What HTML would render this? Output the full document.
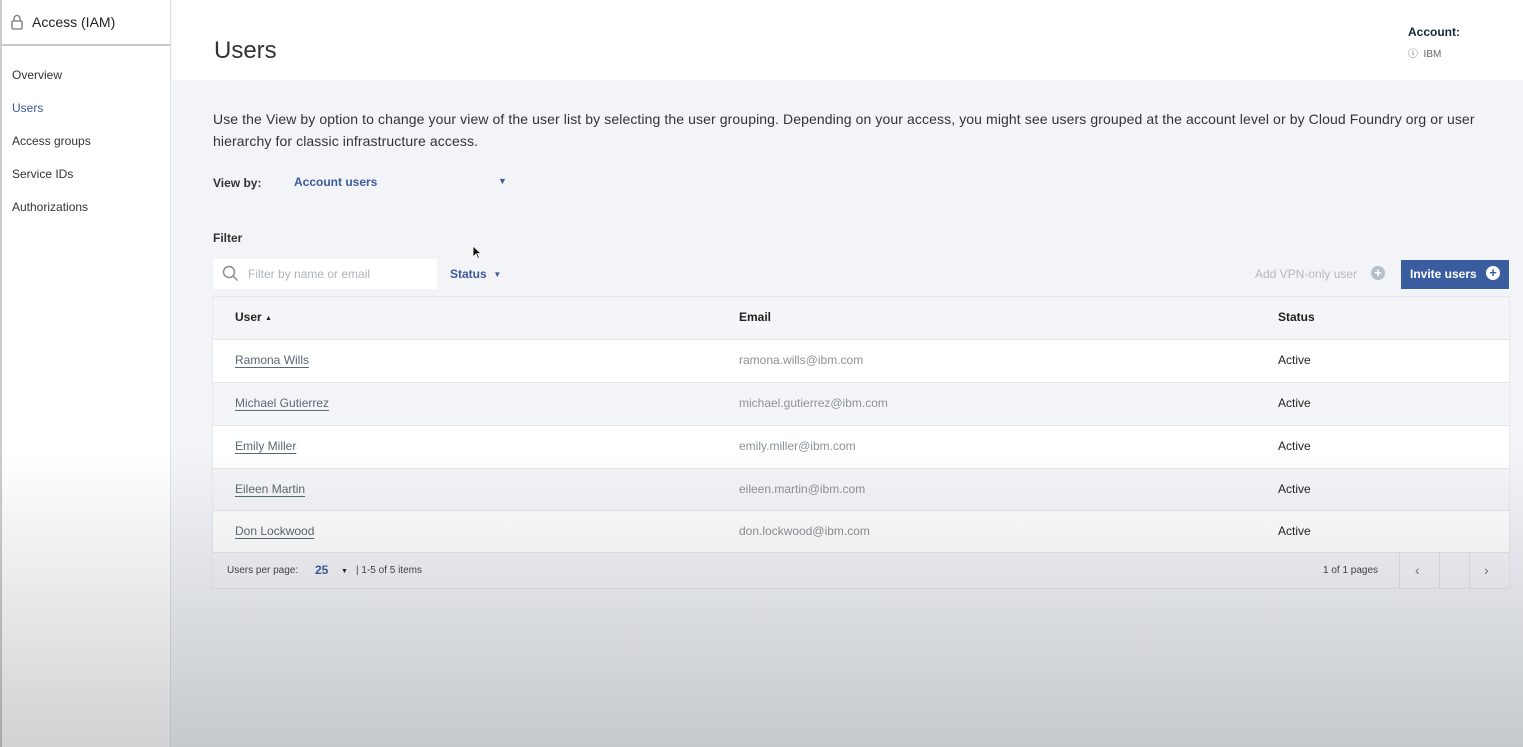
<!DOCTYPE html>
<html><head><meta charset="utf-8"><style>
*{margin:0;padding:0;box-sizing:border-box}
body{width:1523px;height:747px;overflow:hidden;position:relative;font-family:"Liberation Sans",sans-serif;background:#f2f4f8;color:#152935}
.side{position:absolute;left:0;top:0;width:171px;height:747px;background:#fff;border-left:2px solid #ccc;border-right:1px solid #e0e3e8}
.side .hd{height:46px;border-bottom:2px solid #c8c8c8;display:flex;align-items:center;padding-left:8px;font-size:14px;color:#222}
.side a{display:block;position:absolute;left:10px;font-size:12px;color:#333;text-decoration:none}
.top{position:absolute;left:172px;top:0;right:0;height:80px;background:#fff}
.t{position:absolute;white-space:nowrap}
.table{position:absolute;left:213px;top:297px;width:1296px;height:291px;background:#fff;box-shadow:0 0 0 1px #e6e8ec}
.row{position:absolute;left:0;width:1296px;height:43px;font-size:12px;border-top:1px solid #e4e6ea}
.row span{position:absolute;top:13px}
.nm{left:22px;color:#5a6872;text-decoration:underline;text-underline-offset:3px}
.em{left:526px;color:#8c9297}
.st{left:1065px;color:#222}
.ov{position:absolute;left:0;top:0;width:1523px;height:747px;background:linear-gradient(to bottom,rgba(0,0,0,0) 0px,rgba(0,0,0,0) 450px,rgba(20,30,40,0.2) 747px);pointer-events:none}
</style></head><body>
<div class="side">
<div class="hd"><svg width="14" height="16" viewBox="0 0 14 16" style="margin-right:8px"><rect x="2" y="7" width="10" height="8" rx="1" fill="none" stroke="#777" stroke-width="1.3"/><path d="M4 7V4.5a3 3 0 0 1 6 0V7" fill="none" stroke="#777" stroke-width="1.3"/></svg>Access (IAM)</div>
<a style="top:68px">Overview</a>
<a style="top:101px;color:#3d5a9a">Users</a>
<a style="top:134px">Access groups</a>
<a style="top:167px">Service IDs</a>
<a style="top:200px">Authorizations</a>
</div>
<div class="top"></div>
<div class="t" style="left:214px;top:37px;font-size:24px;color:#333">Users</div>
<div class="t" style="left:1408px;top:25px;font-size:12px;font-weight:bold">Account:</div>
<div class="t" style="left:1408px;top:45px;font-size:10px;color:#666">ⓘ&nbsp; IBM</div>
<div class="t" style="left:213px;top:108px;font-size:14px;letter-spacing:0.1px;line-height:22px;color:#333">Use the View by option to change your view of the user list by selecting the user grouping. Depending on your access, you might see users grouped at the account level or by Cloud Foundry org or user<br>hierarchy for classic infrastructure access.</div>
<div class="t" style="left:213px;top:176px;font-size:12px;font-weight:bold;color:#333">View by:</div>
<div class="t" style="left:294px;top:175px;font-size:12px;font-weight:bold;color:#3d5a9a">Account users</div>
<div class="t" style="left:498px;top:176px;font-size:9px;color:#3d5a9a">▼</div>
<div class="t" style="left:213px;top:231px;font-size:12px;font-weight:bold;color:#333">Filter</div>
<div style="position:absolute;left:213px;top:259px;width:224px;height:30px;background:#fff"></div>
<svg style="position:absolute;left:222px;top:265px" width="17" height="17" viewBox="0 0 17 17"><circle cx="7" cy="7" r="5.5" fill="none" stroke="#888" stroke-width="1.4"/><path d="M11 11l4.5 4.5" stroke="#888" stroke-width="1.4"/></svg>
<div class="t" style="left:248px;top:267px;font-size:12px;color:#b0b4b8">Filter by name or email</div>
<div class="t" style="left:450px;top:267px;font-size:12px;font-weight:bold;color:#3d5a9a">Status&nbsp; <span style="font-size:8px;vertical-align:1px">▼</span></div>
<div class="t" style="left:1255px;top:267px;font-size:12px;color:#b5bac0">Add VPN-only user</div>
<div style="position:absolute;left:1371px;top:266px;width:14px;height:14px;border-radius:50%;background:#b5bfcc;color:#fff;font-size:13px;line-height:14px;text-align:center;font-weight:bold">+</div>
<div style="position:absolute;left:1401px;top:260px;width:108px;height:29px;background:#3a5da0"></div>
<div class="t" style="left:1410px;top:267px;font-size:12px;font-weight:bold;color:#fff">Invite users</div>
<div style="position:absolute;left:1486px;top:266px;width:14px;height:14px;border-radius:50%;background:#fff;color:#3a5da0;font-size:13px;line-height:14px;text-align:center;font-weight:bold">+</div>
<div class="table">
<div class="row" style="top:0;background:#f4f5f8;border-top:none"><span style="left:22px;font-weight:bold;color:#222">User&nbsp;<span style="position:static;font-size:7px;vertical-align:1px">▲</span></span><span style="left:526px;font-weight:bold;color:#222">Email</span><span style="left:1065px;font-weight:bold;color:#222">Status</span></div>
<div class="row" style="top:42px;background:#fff"><span class="nm">Ramona Wills</span><span class="em">ramona.wills@ibm.com</span><span class="st">Active</span></div>
<div class="row" style="top:85px;background:#f4f5f8"><span class="nm">Michael Gutierrez</span><span class="em">michael.gutierrez@ibm.com</span><span class="st">Active</span></div>
<div class="row" style="top:128px;background:#fff"><span class="nm">Emily Miller</span><span class="em">emily.miller@ibm.com</span><span class="st">Active</span></div>
<div class="row" style="top:171px;background:#f4f5f8"><span class="nm">Eileen Martin</span><span class="em">eileen.martin@ibm.com</span><span class="st">Active</span></div>
<div class="row" style="top:213px;background:#fff"><span class="nm">Don Lockwood</span><span class="em">don.lockwood@ibm.com</span><span class="st">Active</span></div>
<div class="row" style="top:255px;height:36px;background:#f4f5f8;font-size:10px">
<span style="left:14px;top:12px;color:#444">Users per page:</span>
<span style="left:102px;top:10px;font-size:12px;font-weight:bold;color:#3d5a9a">25</span>
<span style="left:128px;top:15px;font-size:7px">▼</span>
<span style="left:143px;top:12px;color:#444">| 1-5 of 5 items</span>
<span style="left:1110px;top:12px;color:#444">1 of 1 pages</span>
<div style="position:absolute;left:1186px;top:0;width:1px;height:36px;background:#e2e4e8"></div>
<div style="position:absolute;left:1226px;top:0;width:1px;height:36px;background:#e2e4e8"></div>
<div style="position:absolute;left:1256px;top:0;width:1px;height:36px;background:#e2e4e8"></div>
<span style="left:1202px;top:9px;font-size:14px;color:#777">‹</span>
<span style="left:1271px;top:9px;font-size:14px;color:#777">›</span>
</div>
</div>
<svg style="position:absolute;left:472px;top:245px" width="10" height="15" viewBox="0 0 10 15"><path d="M1 1v11l3-3 2 4.5 1.5-.7-2-4.3H9z" fill="#111" stroke="#fff" stroke-width=".8"/></svg>
<div class="ov"></div>
</body></html>
